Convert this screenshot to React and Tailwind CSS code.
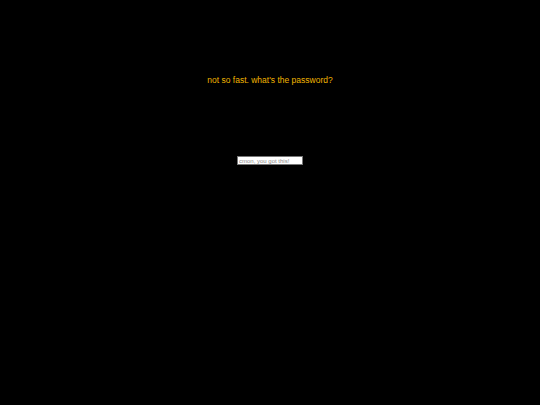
export default function App() {
  return (
    <div className="w-[540px] h-[405px] bg-black flex flex-col items-center font-['Liberation_Sans',Arial,sans-serif]">
      <p className="mt-[75px] text-[8.5px] leading-[11px] text-[#f0b400]">
        not so fast. what's the password?
      </p>
      <input
        type="password"
        placeholder="cmon, you got this!"
        className="mt-[70px] w-[66px] h-[9px] bg-white border border-[#767676] px-[1px] text-[6px] leading-[7px] text-black placeholder:text-[#8a8a8a] outline-none"
      />
    </div>
  );
}
